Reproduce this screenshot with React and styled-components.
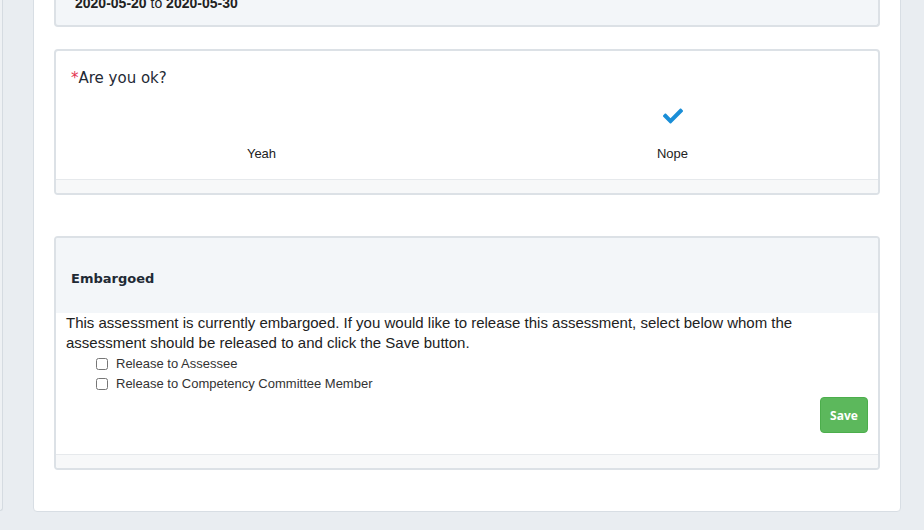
import React from 'react';
import styled, { createGlobalStyle } from 'styled-components';
import { FaCheck } from 'react-icons/fa';

const GlobalStyle = createGlobalStyle`
  html, body {
    margin: 0;
    padding: 0;
    background: #e9edf1;
    font-family: "Liberation Sans", Arial, sans-serif;
    color: #333;
  }
`;

const options = [
  { label: 'Yeah', checked: false },
  { label: 'Nope', checked: true },
];

const releaseTargets = ['Release to Assessee', 'Release to Competency Committee Member'];

function App() {
  return (
    <Page>
      <GlobalStyle />
      <Sidebar />
      <Main>
        <DateCard>
          <b>2020-05-20</b> to <b>2020-05-30</b>
        </DateCard>

        <Card>
          <QuestionBody>
            <Question>
              <Required>*</Required>Are you ok?
            </Question>
            <Options>
              {options.map((opt) => (
                <Option key={opt.label}>
                  <IconSlot>{opt.checked && <FaCheck size={20} />}</IconSlot>
                  <OptionLabel>{opt.label}</OptionLabel>
                </Option>
              ))}
            </Options>
          </QuestionBody>
          <CardFooter />
        </Card>

        <Card $spaced>
          <CardHeader>Embargoed</CardHeader>
          <EmbargoBody>
            <p>
              This assessment is currently embargoed. If you would like to release this assessment,
              select below whom the assessment should be released to and click the Save button.
            </p>
            <CheckList>
              {releaseTargets.map((t) => (
                <CheckRow key={t}>
                  <input type="checkbox" />
                  {t}
                </CheckRow>
              ))}
            </CheckList>
            <Actions>
              <SaveButton type="button">Save</SaveButton>
            </Actions>
          </EmbargoBody>
          <CardFooter />
        </Card>
      </Main>
    </Page>
  );
}

const Page = styled.div`
  display: flex;
  align-items: flex-start;
  gap: 30px;
  height: 530px;
  overflow: hidden;
`;

const Sidebar = styled.div`
  width: 2px;
  height: 510px;
  background: #eef1f4;
  border-right: 1px solid #d5dbe1;
  border-bottom: 1px solid #d5dbe1;
  border-bottom-right-radius: 3px;
  flex-shrink: 0;
`;

const Main = styled.main`
  width: 826px;
  margin-top: -45px;
  padding: 20px 20px 41px;
  background: #fff;
  border: 1px solid #d8dee4;
  border-radius: 4px;
`;

const Card = styled.section`
  margin-top: ${(p) => (p.$spaced ? '41px' : '22px')};
  background: #fff;
  border: 2px solid #dce1e6;
  border-radius: 4px;
  overflow: hidden;
`;

const DateCard = styled.div`
  padding: 17px 19px 12px;
  line-height: 20px;
  font-size: 14px;
  color: #222;
  background: #f3f6f9;
  border: 2px solid #dce1e6;
  border-top: 0;
  border-radius: 0 0 4px 4px;

  b {
    font-weight: bold;
  }
`;

const QuestionBody = styled.div`
  padding: 16px 15px 16px;
`;

const Question = styled.div`
  font-family: "DejaVu Sans", "Open Sans", sans-serif;
  font-size: 15px;
  line-height: 22px;
  color: #1f2a35;
`;

const Required = styled.span`
  color: #e3344f;
`;

const Options = styled.div`
  display: grid;
  grid-template-columns: 1fr 1fr;
  margin: 17px -15px 0;
`;

const Option = styled.div`
  display: flex;
  flex-direction: column;
  align-items: center;
  gap: 19px;
`;

const IconSlot = styled.div`
  height: 20px;
  color: #1a8ed7;
  display: flex;
  align-items: center;
`;

const OptionLabel = styled.div`
  font-size: 13px;
  line-height: 18px;
  color: #222;
`;

const CardFooter = styled.div`
  height: 13px;
  background: #f7f8f9;
  border-top: 1px solid #e6e9ec;
`;

const CardHeader = styled.div`
  height: 75px;
  padding: 5px 15px 0;
  box-sizing: border-box;
  display: flex;
  align-items: center;
  background: #f3f6f9;
  font-family: "DejaVu Sans", "Open Sans", sans-serif;
  font-weight: bold;
  font-size: 13px;
  color: #1f2a35;
`;

const EmbargoBody = styled.div`
  padding: 0 10px 21px;
  font-size: 15px;
  line-height: 20px;
  color: #222;

  p {
    margin: 0;
  }
`;

const CheckList = styled.div`
  display: flex;
  flex-direction: column;
  padding: 1px 0 0 30px;
`;

const CheckRow = styled.label`
  display: flex;
  align-items: center;
  gap: 8px;
  font-size: 13px;
  line-height: 20px;
  color: #333;

  input {
    margin: 0;
    width: 12px;
    height: 12px;
  }
`;

const Actions = styled.div`
  display: flex;
  justify-content: flex-end;
  margin-top: 3px;
`;

const SaveButton = styled.button`
  width: 48px;
  height: 36px;
  background: #5cb85c;
  border: 1px solid #4cae4c;
  border-radius: 4px;
  color: #fff;
  font-family: "Open Sans", sans-serif;
  font-weight: bold;
  font-size: 12px;
  cursor: pointer;
`;

export default App;
